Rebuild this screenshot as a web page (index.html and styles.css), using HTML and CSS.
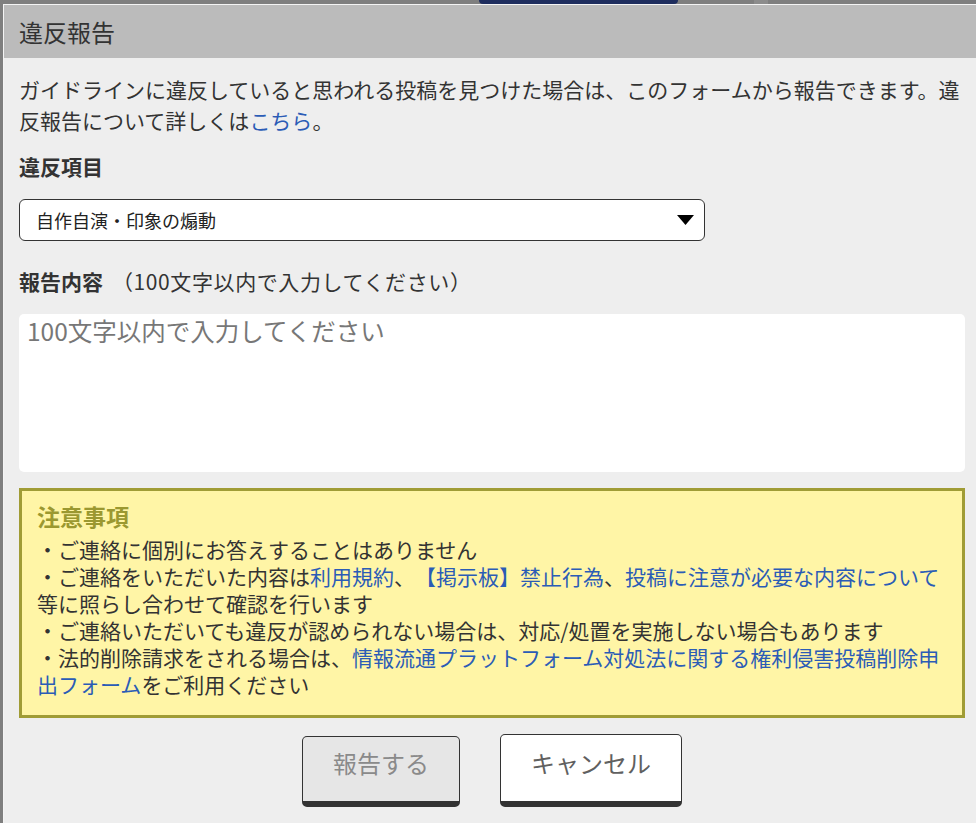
FILE: index.html
```html
<!DOCTYPE html>
<html lang="ja">
<head>
  <meta charset="UTF-8">
  <meta name="viewport" content="width=device-width, initial-scale=1.0">
  <title>違反報告</title>
  <link rel="stylesheet" href="styles.css">
</head>
<body>

  <!-- 背景のページ（オーバーレイ越しに少しだけ見える） -->
  <div class="page-bg">
    <div class="bg-strip">
      <span class="bg-pill"></span>
      <span class="bg-tab"></span>
    </div>
  </div>

  <!-- 違反報告ダイアログ -->
  <div class="report-modal">
    <div class="modal-header">違反報告</div>

    <div class="modal-body">
      <p class="lead">
        ガイドラインに違反していると思われる投稿を見つけた場合は、このフォームから報告できます。違反報告について詳しくは<a href="#">こちら</a>。
      </p>

      <div class="field-label">違反項目</div>
      <div class="select-wrap">
        <select class="report-select">
          <option>自作自演・印象の煽動</option>
          <option>誹謗中傷</option>
          <option>その他</option>
        </select>
        <svg class="select-arrow" width="17" height="10" viewBox="0 0 17 10"><polygon points="0,0 17,0 8.5,10" fill="#000"/></svg>
      </div>

      <div class="field-label">報告内容<span class="note">（100文字以内で入力してください）</span></div>
      <textarea class="report-text" placeholder="100文字以内で入力してください"></textarea>

      <!-- 注意事項 -->
      <div class="notice">
        <div class="notice-title">注意事項</div>
        <ul class="notice-list">
          <li>・ご連絡に個別にお答えすることはありません</li>
          <li>・ご連絡をいただいた内容は<a href="#">利用規約</a>、<a href="#">【掲示板】禁止行為</a>、<a href="#">投稿に注意が必要な内容について</a>等に照らし合わせて確認を行います</li>
          <li>・ご連絡いただいても違反が認められない場合は、対応/処置を実施しない場合もあります</li>
          <li>・法的削除請求をされる場合は、<a href="#">情報流通プラットフォーム対処法に関する権利侵害投稿削除申出フォーム</a>をご利用ください</li>
        </ul>
      </div>

      <div class="button-area">
        <button class="btn btn-submit" disabled>報告する</button>
        <button class="btn btn-cancel">キャンセル</button>
      </div>
    </div>
  </div>

</body>
</html>
```

FILE: styles.css
```css
/* === 基本 === */
html, body {
  margin: 0;
  height: 100%;
  overflow: hidden;
}
body {
  background-color: #7f7f7f;
  font-family: "Noto Sans CJK JP", "Noto Sans", sans-serif;
  color: #333;
  text-spacing-trim: space-all;
}
a {
  color: #2b5cb6;
  text-decoration: none;
}

/* === 背景ページ === */
.bg-strip {
  height: 4px;
  display: flex;
}
.bg-pill {
  margin-left: 479px;
  width: 199px;
  background: #1e2d5e;
  border-radius: 0 0 6px 6px;
}
.bg-tab {
  margin-left: 76px;
  width: 14px;
  background: #8c8c8c;
}

/* === ダイアログ === */
.report-modal {
  position: fixed;
  top: 4px;
  left: 3px;
  width: 980px;
  bottom: -40px;
  background: #eeeeee;
  border-top: 1px solid #f4f4f4;
  border-left: 1px solid #f4f4f4;
}
.modal-header {
  height: 53px;
  line-height: 53px;
  background: #bbbbbb;
  padding-left: 15px;
  font-size: 24px;
  color: #333;
}
.modal-body {
  width: 946px;
  padding: 16px 0 0 15px;
}
.lead {
  margin: 0;
  font-size: 21px;
  line-height: 31px;
}
.field-label {
  margin-top: 15px;
  font-size: 21px;
  line-height: 31px;
  font-weight: bold;
}
.field-label + .select-wrap {
  margin-top: 17px;
}
.select-wrap + .field-label {
  margin-top: 25px;
}
.note {
  font-weight: normal;
  margin-left: 9px;
  letter-spacing: 0.6px;
}

/* セレクト */
.select-wrap {
  position: relative;
  width: 686px;
}
.report-select {
  appearance: none;
  -webkit-appearance: none;
  display: block;
  width: 686px;
  height: 42px;
  box-sizing: border-box;
  border: 1px solid #333;
  border-radius: 6px;
  background: #fff;
  padding: 0 40px 0 16px;
  font-family: inherit;
  font-size: 18px;
  color: #222;
}
.select-arrow {
  position: absolute;
  right: 11px;
  top: 16px;
  pointer-events: none;
}

/* テキストエリア */
.report-text {
  display: block;
  margin-top: 17px;
  width: 946px;
  height: 158px;
  box-sizing: border-box;
  border: none;
  border-radius: 5px;
  background: #fff;
  padding: 1px 8px;
  font-family: inherit;
  font-size: 24.5px;
  line-height: 32px;
  resize: none;
}
.report-text::placeholder {
  color: #777;
}

/* 注意事項 */
.notice {
  margin-top: 16px;
  border: 3px solid #a09c35;
  background: #fff5a6;
  padding: 10px 15px 17px;
}
.notice-title {
  color: #9b9830;
  font-weight: bold;
  font-size: 23px;
  line-height: 30px;
  margin-bottom: 5px;
}
.notice-list {
  list-style: none;
  margin: 0;
  padding: 0;
  font-size: 21px;
  line-height: 27px;
}

/* ボタン */
.button-area {
  margin-top: 16px;
  display: flex;
  justify-content: center;
  align-items: flex-end;
  gap: 40px;
}
.btn {
  font-family: inherit;
  font-size: 24px;
  line-height: 32px;
  border: 1px solid #333;
  border-bottom-width: 6px;
  border-radius: 5px;
  padding: 10px 30px 22px;
}
.btn-submit {
  background: #e6e6e6;
  color: #8a8a8a;
}
.btn-cancel {
  background: #fff;
  color: #606060;
  padding-top: 12px;
  cursor: pointer;
}
```
